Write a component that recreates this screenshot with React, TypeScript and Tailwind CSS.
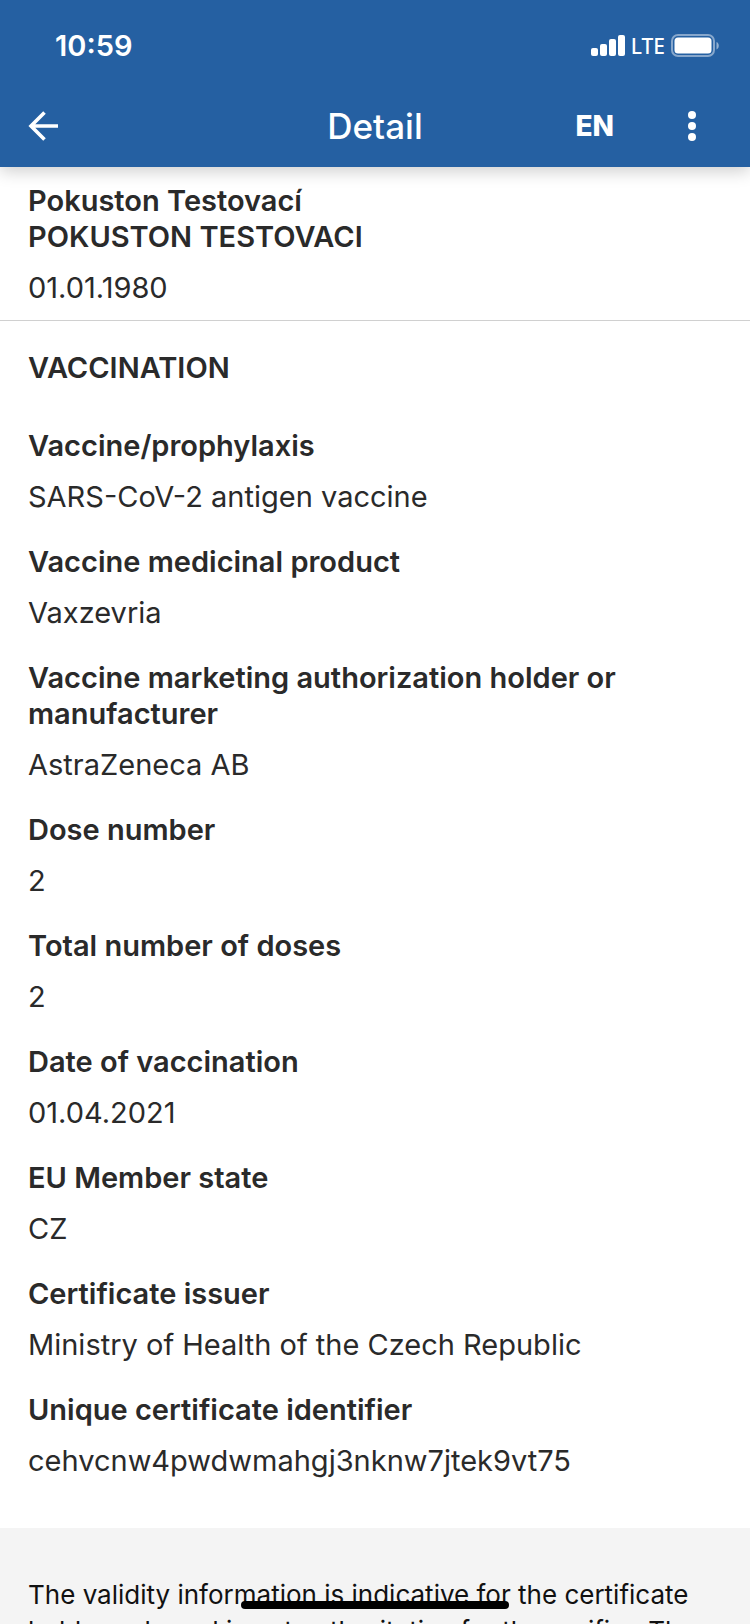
import { useState } from 'react';

const fields = [
  { label: 'Vaccine/prophylaxis', value: 'SARS-CoV-2 antigen vaccine' },
  { label: 'Vaccine medicinal product', value: 'Vaxzevria' },
  { label: 'Vaccine marketing authorization holder or manufacturer', value: 'AstraZeneca AB' },
  { label: 'Dose number', value: '2' },
  { label: 'Total number of doses', value: '2' },
  { label: 'Date of vaccination', value: '01.04.2021' },
  { label: 'EU Member state', value: 'CZ' },
  { label: 'Certificate issuer', value: 'Ministry of Health of the Czech Republic' },
  { label: 'Unique certificate identifier', value: 'cehvcnw4pwdwmahgj3nknw7jtek9vt75' },
];

function StatusBar() {
  return (
    <div className="flex h-[92px] items-center justify-between pr-[31px] pl-[55px]">
      <span className="text-[29px] leading-9 font-semibold">10:59</span>
      <div className="flex items-center gap-[6px]">
        <svg width="34" height="22" viewBox="0 0 34 22" fill="currentColor" aria-hidden="true">
          <rect x="0" y="13" width="7" height="8" rx="2" />
          <rect x="9" y="9" width="7" height="12" rx="2" />
          <rect x="18" y="4" width="7" height="17" rx="2" />
          <rect x="27" y="0" width="7" height="21" rx="2" />
        </svg>
        <span className="font-['Noto_Sans',sans-serif] text-[21px] leading-7 font-medium">LTE</span>
        <svg width="48" height="24" viewBox="0 0 48 24" fill="none" aria-hidden="true">
          <rect x="1" y="1" width="42" height="21" rx="6" stroke="#fff" strokeOpacity="0.45" strokeWidth="2" />
          <rect x="3.5" y="3.5" width="37" height="16" rx="3.5" fill="#fff" />
          <path d="M45.5 8v7.5c1.500-.6 2.300-2 2.300-3.700s-.8-3.200-2.300-3.800z" fill="#fff" fillOpacity="0.5" />
        </svg>
      </div>
    </div>
  );
}

export default function App() {
  const [language, setLanguage] = useState('EN');

  return (
    <div className="relative flex h-screen flex-col overflow-hidden bg-white font-['Inter',sans-serif] text-[#2a2a2a]">
      <header className="z-10 shrink-0 bg-[#2560a2] text-white shadow-[0_4px_16px_rgba(0,0,0,0.2)]">
        <StatusBar />
        <div className="grid h-[75px] grid-cols-[1fr_auto_1fr] items-center px-7 pb-2">
          <button type="button" aria-label="Back" className="justify-self-start">
            <svg width="32" height="30" viewBox="0 0 32 30" fill="none" stroke="currentColor" strokeWidth="3.6" aria-hidden="true">
              <path d="M16.500 1.500 3 15l13.500 13.500M3 15h27" />
            </svg>
          </button>
          <h1 className="text-[35px] leading-10 font-medium">Detail</h1>
          <div className="flex items-center justify-end gap-[74px] pr-[26px]">
            <button
              type="button"
              className="text-[28px] leading-9 font-extrabold"
              onClick={() => setLanguage(language === 'EN' ? 'CS' : 'EN')}
            >
              {language}
            </button>
            <button type="button" aria-label="More options">
              <svg width="8" height="30" viewBox="0 0 8 30" fill="currentColor" aria-hidden="true">
                <circle cx="4" cy="4" r="4" />
                <circle cx="4" cy="15" r="4" />
                <circle cx="4" cy="26" r="4" />
              </svg>
            </button>
          </div>
        </div>
      </header>

      <main className="grow overflow-y-auto text-[29px] leading-9 [scrollbar-width:none]">
        <section className="border-b border-[#d0d0d0] px-7 pt-4 pb-[14px]">
          <h2 className="font-semibold">
            Pokuston Testovací
            <br />
            POKUSTON TESTOVACI
          </h2>
          <p className="mt-[15px]">01.01.1980</p>
        </section>

        <section className="px-7 pt-[29px] pb-[49px]">
          <h2 className="font-semibold">VACCINATION</h2>
          <dl className="mt-[42px] flex flex-col gap-[29px]">
            {fields.map((field) => (
              <div key={field.label}>
                <dt className="font-semibold">{field.label}</dt>
                <dd className="mt-[15px]">{field.value}</dd>
              </div>
            ))}
          </dl>
        </section>

        <footer className="bg-[#f4f4f4] px-7 py-[49px] text-[26px] text-[#111111]">
          <p>
            The validity information is indicative for the certificate holder only and is not authoritative for the
            verifier. The verifier checks the certificate with a separate application.
          </p>
        </footer>
      </main>

      <div className="absolute bottom-[15px] left-1/2 h-2 w-[268px] -translate-x-1/2 rounded-full bg-black" />
    </div>
  );
}
